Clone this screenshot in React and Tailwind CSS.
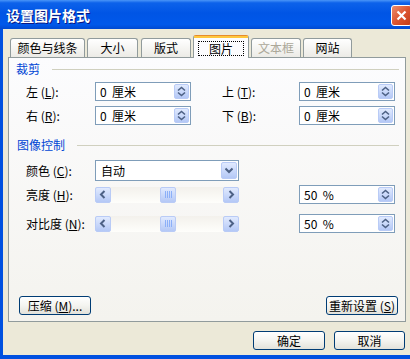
import React from "react";

function SpinBtn() {
  return (
    <div className="w-[15px] h-[15px] rounded-[2px] border border-[#B9CBF6] bg-gradient-to-b from-[#E1EAFE] to-[#B4C8F6] flex items-center justify-center">
      <svg width="9" height="11" viewBox="0 0 9 11">
        <path d="M1 4.5 L4.5 1.5 L8 4.5" fill="none" stroke="#4D6185" strokeWidth="1.6" />
        <path d="M1 6.5 L4.5 9.5 L8 6.5" fill="none" stroke="#4D6185" strokeWidth="1.6" />
      </svg>
    </div>
  );
}

function NumBox({ value }) {
  return (
    <div className="w-[96px] h-[19px] border border-[#7F9DB9] bg-white flex items-center pl-[4px] pr-px">
      <span className="flex-1 text-[12px] leading-[14px] whitespace-pre">{value}</span>
      <SpinBtn />
    </div>
  );
}

function Lbl({ text, k, className }) {
  return (
    <span className={`text-[12px] leading-[14px] whitespace-pre ${className}`}>
      {text} (<u>{k}</u>):
    </span>
  );
}

function ArrowBtn({ dir }) {
  return (
    <div className="w-[16px] h-[16px] rounded-[2px] border border-[#B9CBF6] bg-gradient-to-b from-[#E1EAFE] to-[#B4C8F6] flex items-center justify-center">
      <svg width="8" height="9" viewBox="0 0 8 9">
        {dir === "left" && <path d="M5.5 1 L2 4.5 L5.5 8" fill="none" stroke="#4D6185" strokeWidth="2" />}
        {dir === "right" && <path d="M2.5 1 L6 4.5 L2.5 8" fill="none" stroke="#4D6185" strokeWidth="2" />}
      </svg>
    </div>
  );
}

function Slider() {
  return (
    <div className="w-[144px] h-[16px] flex items-center bg-gradient-to-b from-[#F3F1EC] to-[#FEFEFB]">
      <ArrowBtn dir="left" />
      <div className="w-[49px]" />
      <div className="w-[16px] h-[16px] rounded-[2px] border border-[#B9CBF6] bg-gradient-to-b from-[#E1EAFE] to-[#B4C8F6] flex items-center justify-center gap-px">
        <div className="w-px h-[7px] bg-[#EEF4FE] border-r border-[#8CB0F8]" />
        <div className="w-px h-[7px] bg-[#EEF4FE] border-r border-[#8CB0F8]" />
        <div className="w-px h-[7px] bg-[#EEF4FE] border-r border-[#8CB0F8]" />
        <div className="w-px h-[7px] bg-[#EEF4FE] border-r border-[#8CB0F8]" />
      </div>
      <div className="flex-1" />
      <ArrowBtn dir="right" />
    </div>
  );
}

function Tab({ label, className, disabled }) {
  return (
    <div
      className={`h-[19px] border border-b-0 border-[#919B9C] rounded-t-[3px] bg-gradient-to-b from-white to-[#ECEBE6] flex items-center justify-center text-[12px] leading-[14px] ${
        disabled ? "text-[#ACA899]" : "text-black"
      } ${className}`}
    >
      {label}
    </div>
  );
}

function XpButton({ children, className }) {
  return (
    <div
      className={`h-[19px] border border-[#003C74] rounded-[3px] bg-gradient-to-b from-white via-[#F4F4F0] to-[#E3E2DA] flex items-center justify-center text-[12px] leading-[14px] whitespace-pre ${className}`}
    >
      {children}
    </div>
  );
}

export default function App() {
  return (
    <div className="w-[410px] h-[359px] flex flex-col overflow-hidden bg-[#0050E0] font-['Noto_Sans_CJK_SC',sans-serif] text-black">
      {/* title bar */}
      <div className="h-[29px] flex items-center pl-[6px] bg-[linear-gradient(to_bottom,#4A95F8_0%,#0D62EA_10%,#0055E5_45%,#0058EA_85%,#0049D0_100%)]">
        <span className="flex-1 text-white font-bold text-[14px] leading-[16px] [text-shadow:1px_1px_0_#0A1883]">设置图片格式</span>
        <div className="w-[21px] h-[21px] mt-px rounded-[3px] border border-white bg-gradient-to-br from-[#EC8C6C] via-[#DC5530] to-[#C23A16] flex items-center justify-center -mr-[2px]">
          <svg width="11" height="11" viewBox="0 0 11 11">
            <path d="M1.5 1.5 L9.5 9.5 M9.5 1.5 L1.5 9.5" stroke="white" strokeWidth="2.2" />
          </svg>
        </div>
      </div>

      {/* body */}
      <div className="flex-1 ml-[3px] mb-[4px] bg-[#ECE9D8] flex flex-col pl-[5px]">
        {/* tabs */}
        <div className="relative z-10 h-[28px] flex items-end pl-[2px]">
          <Tab label="颜色与线条" className="w-[75px]" />
          <Tab label="大小" className="w-[51px] ml-[2px]" />
          <Tab label="版式" className="w-[50px] ml-[3px]" />
          <div className="w-[56px] h-[23px] ml-[2px] -mb-px bg-[#FCFCFE] border-x border-[#919B9C] border-t border-t-[#E68B2C] rounded-t-[3px] flex flex-col">
            <div className="h-[2px] bg-[#FFC73C]" />
            <div className="mx-[4px] mt-[3px] h-[15px] border border-dotted border-black flex items-center justify-center text-[12px] leading-[14px]">
              图片
            </div>
          </div>
          <Tab label="文本框" className="w-[50px] ml-[2px]" disabled />
          <Tab label="网站" className="w-[49px] ml-[2px]" />
        </div>

        {/* panel */}
        <div className="w-[398px] h-[265px] border border-[#919B9C] bg-gradient-to-b from-[#FCFCFE] to-[#F4F3EE] flex flex-col">
          <div className="h-[14px] mt-[4px] flex items-center pl-[7px] pr-[6px]">
            <span className="text-[12px] leading-[14px] text-[#0046D5]">裁剪</span>
            <div className="flex-1 h-px bg-[#D0D0BF] ml-[12px]" />
          </div>

          <div className="flex items-center mt-[6px] pl-[17px]">
            <Lbl text="左" k="L" className="w-[69px]" />
            <NumBox value="0  厘米" />
            <Lbl text="上" k="T" className="w-[77px] ml-[31px]" />
            <NumBox value="0  厘米" />
          </div>
          <div className="flex items-center mt-[5px] pl-[17px]">
            <Lbl text="右" k="R" className="w-[69px]" />
            <NumBox value="0  厘米" />
            <Lbl text="下" k="B" className="w-[77px] ml-[31px]" />
            <NumBox value="0  厘米" />
          </div>

          <div className="h-[14px] mt-[13px] flex items-center pl-[8px] pr-[6px]">
            <span className="text-[12px] leading-[14px] text-[#0046D5]">图像控制</span>
            <div className="flex-1 h-px bg-[#D0D0BF] ml-[12px]" />
          </div>

          <div className="flex items-center mt-[8px] pl-[17px]">
            <Lbl text="颜色" k="C" className="w-[69px]" />
            <div className="w-[144px] h-[21px] border border-[#7F9DB9] bg-white flex items-center pl-[5px] pr-px">
              <span className="flex-1 text-[12px] leading-[14px]">自动</span>
              <div className="w-[16px] h-[17px] rounded-[2px] border border-[#B9CBF6] bg-gradient-to-b from-[#E1EAFE] to-[#B4C8F6] flex items-center justify-center">
                <svg width="8" height="9" viewBox="0 0 8 9">
                  <path d="M0.5 2.5 L4 6 L7.5 2.5" fill="none" stroke="#4D6185" strokeWidth="2" />
                </svg>
              </div>
            </div>
          </div>

          <div className="flex items-center mt-[4px] pl-[17px]">
            <Lbl text="亮度" k="H" className="w-[69px]" />
            <Slider />
            <div className="ml-[60px]">
              <NumBox value="50  %" />
            </div>
          </div>
          <div className="flex items-center mt-[10px] pl-[17px]">
            <Lbl text="对比度" k="N" className="w-[69px]" />
            <Slider />
            <div className="ml-[60px]">
              <NumBox value="50  %" />
            </div>
          </div>

          <div className="flex-1" />
          <div className="flex items-center justify-between pl-[10px] pr-[7px] pb-[6px]">
            <XpButton className="w-[72px]">
              压缩 (<u>M</u>)...
            </XpButton>
            <XpButton className="w-[72px]">
              重新设置 (<u>S</u>)
            </XpButton>
          </div>
        </div>

        {/* dialog buttons */}
        <div className="flex items-center mt-[9px]">
          <XpButton className="w-[72px] ml-[245px]">确定</XpButton>
          <XpButton className="w-[71px] ml-[9px]">取消</XpButton>
        </div>
      </div>
    </div>
  );
}
